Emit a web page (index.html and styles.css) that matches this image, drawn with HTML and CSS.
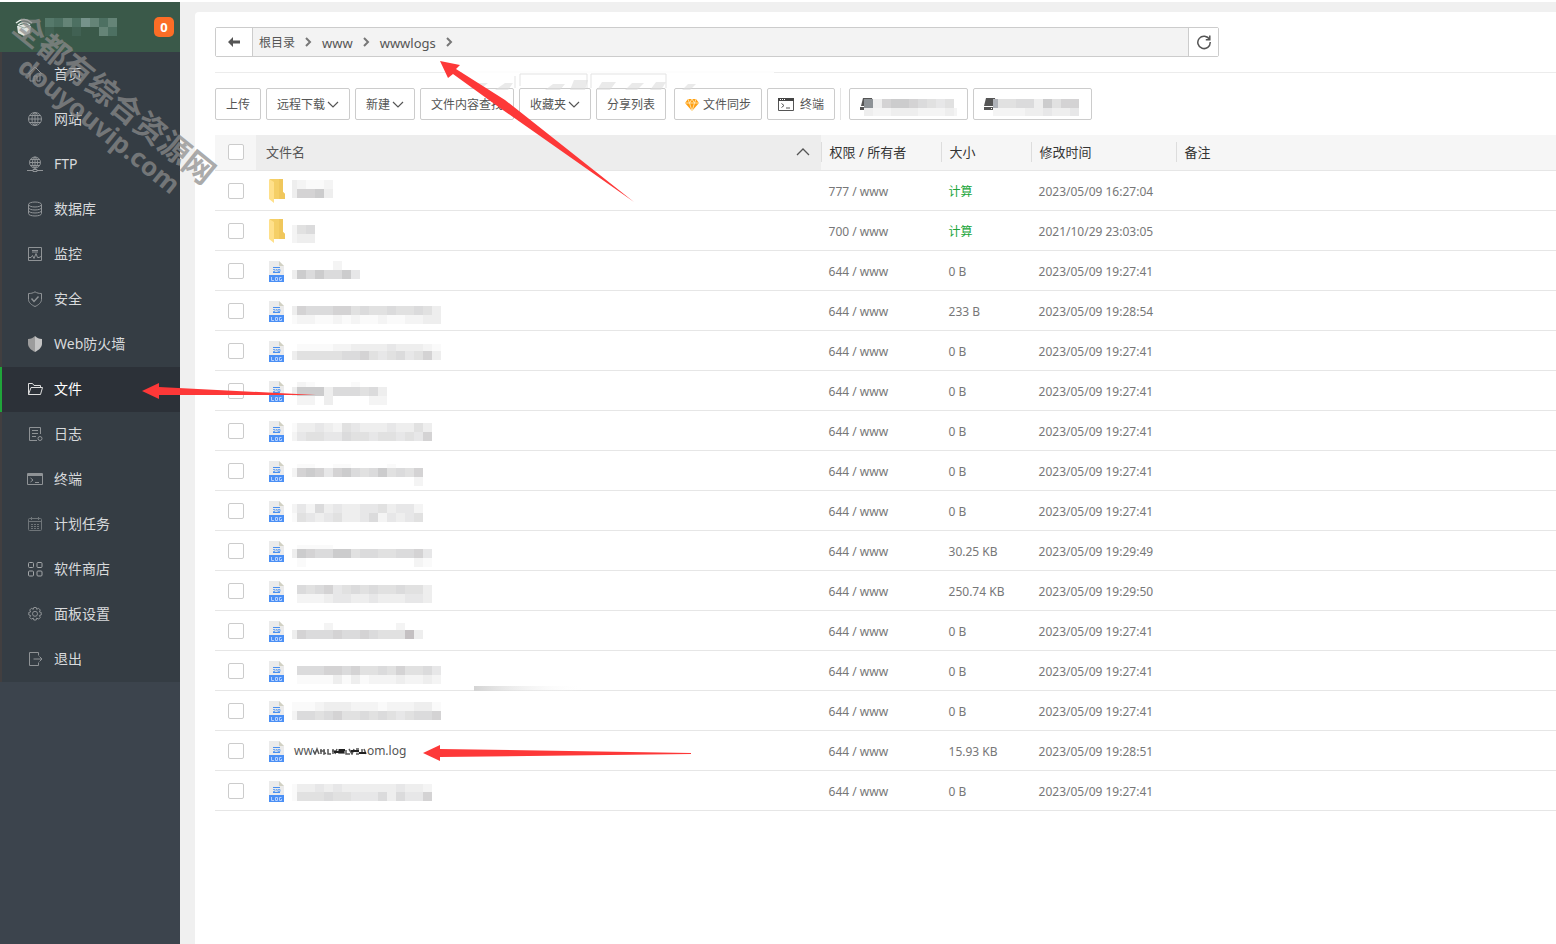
FILE: index.html
```html
<!DOCTYPE html>
<html lang="zh-CN">
<head>
<meta charset="utf-8">
<title>文件</title>
<link rel="stylesheet" href="styles.css">
</head>
<body>
<div class="app">
  <aside class="sidebar">
    <header class="brand">
      <svg class="brand-logo" width="20" height="20" viewBox="0 0 20 20"><path d="M2 6 Q10-1 18 6M4 8 Q10 3 16 8" fill="none" stroke="#e4ebe7" stroke-width="1.5"/><path d="M3 9l7-2 7 2-1 7-6 3-6-3z" fill="#dfe5e2"/><path d="M5 9l5 2 5-2" fill="none" stroke="#9aa9a1"/></svg>
      <svg class="brand-name" width="72" height="18" shape-rendering="crispEdges"><path fill="#56796b" d="M0 0h9v9H0zM27 0h9v9h-9zM54 9h9v9h-9z"/><path fill="#658477" d="M18 0h9v9h-9zM45 0h9v9h-9zM63 0h9v9h-9zM54 9h9v9h-9z"/><path fill="#4d7062" d="M9 0h9v9H9zM27 0h9v9h-9zM54 0h9v9h-9zM63 9h9v9h-9z"/><path fill="#76938b" d="M36 0h9v9h-9z"/><path fill="#416153" d="M0 9h9v9H0zM27 9h9v9h-9z"/></svg>
      <span class="badge">0</span>
    </header>
    <nav class="menu">
      <a href="#"><svg viewBox="0 0 16 16"><path d="M1 8l7-7 7 7M3 7v8h4v-5h3v5h3V7"/></svg>首页</a>
      <a href="#"><svg viewBox="0 0 16 16"><circle cx="8" cy="8" r="6.5"/><ellipse cx="8" cy="8" rx="3" ry="6.500"/><path d="M8 1.500v13M1.500 8h13M2.500 4.500h11M2.500 11.500h11"/></svg>网站</a>
      <a href="#"><svg viewBox="0 0 16 16"><circle cx="8" cy="6.500" r="5.500"/><ellipse cx="8" cy="6.500" rx="2.500" ry="5.500"/><path d="M8 1v13M2.500 6.500h11M3.500 3.500h9M3.500 9.500h9M0 14.500h6M10 14.500h6M6 13.500h4v2H6z"/></svg>FTP</a>
      <a href="#"><svg viewBox="0 0 16 16"><ellipse cx="8" cy="3.500" rx="6.500" ry="2.500"/><path d="M1.500 3.500v9c0 3.300 13 3.300 13 0v-9M1.500 6.500c0 3.300 13 3.300 13 0M1.500 9.500c0 3.300 13 3.300 13 0"/></svg>数据库</a>
      <a href="#"><svg viewBox="0 0 16 16"><path d="M1.500 1.500h13v13h-13zM5 4.500h6M5 6h6M2 11.500h2l1.500-2 1.500 3 2-5 1.500 4h1.500l2-1"/></svg>监控</a>
      <a href="#"><svg viewBox="0 0 16 16"><path d="M8 .800c2 1.300 4 1.700 6.500 1.700v6c0 3-3 5.500-6.500 7-3.500-1.500-6.500-4-6.500-7v-6C4 2.500 6 2.100 8 .800z"/><path d="M4.500 7.500L7 10.500l4.500-5" stroke-width="1.400"/></svg>安全</a>
      <a href="#"><svg viewBox="0 0 16 16"><path class="solid-dim" d="M8 0v16c-4-2-7-5-7-8V3c3 0 5-1 7-3z"/><path class="solid" d="M8 0v16c4-2 7-5 7-8V3c-3 0-5-1-7-3z"/></svg>Web防火墙</a>
      <a href="#" class="active"><svg viewBox="0 0 16 16"><path d="M1.500 13.500v-11h4l1.500 2h6.500v2M1.500 13.500l2.500-7h11.500l-2 7z"/></svg>文件</a>
      <a href="#"><svg viewBox="0 0 16 16"><path d="M13.500 8V1.500h-11v13H10M5 4.500h6M5 7.500h6M5 10.500h4"/><circle cx="13" cy="12.500" r="2"/></svg>日志</a>
      <a href="#"><svg viewBox="0 0 16 16"><path d="M.500 2.500h15v11H.500zM.500 4.500h15M.500 3.500h15M3.500 7l2.500 2-2.500 2M8 11.500h4"/></svg>终端</a>
      <a href="#"><svg viewBox="0 0 16 16" class="dim"><path d="M1.500 3.500q0-1 1-1h11q1 0 1 1v10q0 1-1 1h-11q-1 0-1-1zM1.500 5.500h13M4.500 1v3M11.500 1v3"/><path stroke-dasharray="2 1" d="M4 8.500h8M4 10.500h8M4 12.500h8"/></svg>计划任务</a>
      <a href="#"><svg viewBox="0 0 16 16" class="bright"><rect x="1.500" y="1.500" width="5" height="5" rx="1"/><rect x="10" y="1.500" width="5" height="5" rx="1"/><rect x="1.500" y="10" width="5" height="5" rx="1"/><rect x="10" y="10" width="5" height="5" rx="1"/></svg>软件商店</a>
      <a href="#"><svg viewBox="0 0 16 16"><path d="M6.800 1.500h2.400l.5 1.800 1.900-1 1.700 1.700-1 1.900 1.900.500v2.600l-1.900.5 1 1.900-1.700 1.700-1.900-1-.5 1.900H6.800l-.5-1.900-1.900 1-1.700-1.700 1-1.900-1.900-.5V6.400l1.900-.5-1-1.900 1.700-1.700 1.900 1z"/><circle cx="8" cy="7.800" r="2.500"/></svg>面板设置</a>
      <a href="#"><svg viewBox="0 0 16 16"><path d="M11.500 4.500v-3h-9v13h9v-3M6.500 8h8.500M12.500 5.500L15 8l-2.500 2.500"/></svg>退出</a>
    </nav>
  </aside>

  <main class="content">
    <section class="panel">
      <div class="path">
        <button class="path-back" aria-label="返回"><svg width="12" height="10" viewBox="0 0 12 10"><path d="M0 5l5-5v3.500h7v3H5V10z" fill="#555"/></svg></button>
        <nav class="crumbs">
          <a href="#">根目录</a><svg class="sep" viewBox="0 0 8 10"><path d="M2 1l4 4-4 4"/></svg>
          <a href="#" class="latin">www</a><svg class="sep" viewBox="0 0 8 10"><path d="M2 1l4 4-4 4"/></svg>
          <a href="#" class="latin">wwwlogs</a><svg class="sep" viewBox="0 0 8 10"><path d="M2 1l4 4-4 4"/></svg>
        </nav>
        <button class="path-reload" aria-label="刷新"><svg width="16" height="16" viewBox="0 0 16 16"><path d="M13.500 5.500A6.200 6.200 0 1 0 14.200 8M13.800 1.500v4.200H9.800" fill="none" stroke="#555" stroke-width="1.500"/></svg></button>
      </div>

      <div class="toolbar">
        <button>上传</button>
        <button>远程下载<svg class="chev" viewBox="0 0 12 12"><path d="M1 3l5 5 5-5"/></svg></button>
        <button>新建<svg class="chev" viewBox="0 0 12 12"><path d="M1 3l5 5 5-5"/></svg></button>
        <button>文件内容查找</button>
        <button>收藏夹<svg class="chev" viewBox="0 0 12 12"><path d="M1 3l5 5 5-5"/></svg></button>
        <button>分享列表</button>
        <button class="spaced"><svg class="gem" width="14" height="12" viewBox="0 0 14 12"><path d="M3 0h8l3 4-7 8-7-8z" fill="#ff9f13"/><path d="M0 4h14M3 0l1.500 4L7 12l2.500-8L11 0M4.500 4L7 0l2.500 4" fill="none" stroke="#fff0c8" stroke-width=".8"/></svg>文件同步</button>
        <button><svg class="term" width="16" height="14" viewBox="0 0 16 14"><path d="M.5.500h15v12H.500z" fill="#fff" stroke="#555"/><path d="M0 0h16v3H0z" fill="#444"/><path d="M2 1.500h1M4 1.500h1M6 1.500h1" stroke="#fff"/><path d="M3.500 5.500L6 7.500l-2.500 2M8 10h4" fill="none" stroke="#555"/></svg>终端</button>
        <span class="divider"></span>
        <button class="disk" aria-label="磁盘一"><svg width="97" height="24" viewBox="0 0 97 24"><path d="M3 6h9l1 8H1z" fill="#555"/><path d="M0 15h13v3H0z" fill="#555"/><g class="disk-mosaic" data-x="-5" data-cells="0c378876545|0322333222321"></g></svg></button>
        <button class="disk" aria-label="磁盘二"><svg width="97" height="24" viewBox="0 0 97 24"><path d="M2 6h9l1 8H0z" fill="#555"/><path d="M0 15h12v3H0z" fill="#555"/><path d="M7 16.500h4" stroke="#fff" stroke-dasharray="1 1"/><g class="disk-mosaic" data-x="5" data-cells="a556638577|2222334334"></g></svg></button>
      </div>

      <table class="files">
        <colgroup><col class="c-check"><col class="c-name"><col class="c-perm"><col class="c-size"><col class="c-time"><col></colgroup>
        <thead>
          <tr>
            <th><input type="checkbox" aria-label="全选"></th>
            <th class="sorted"><div class="sort-head">文件名<svg width="14" height="8" viewBox="0 0 14 8"><path d="M1 7l6-6 6 6" fill="none" stroke="#555" stroke-width="1.300"/></svg></div></th>
            <th><div class="head">权限 / 所有者</div></th>
            <th><div class="head">大小</div></th>
            <th><div class="head">修改时间</div></th>
            <th><div class="head">备注</div></th>
          </tr>
        </thead>
        <tbody id="rows"></tbody>
      </table>
    </section>
  </main>
</div>

<svg class="overlay" width="1240" height="800" viewBox="0 0 1240 800" aria-hidden="true">
  <defs><linearGradient id="fade"><stop offset="0" stop-color="#d4d4d4"/><stop offset="1" stop-color="#fff" stop-opacity="0"/></linearGradient></defs>
  <path d="M462 72h312" stroke="#fdfdfd" stroke-width="2"/>
  <path d="M515 88V76M520 86V74h67v14M591 88V74h75v14" fill="none" stroke="#e3e3e3"/>
  <path d="M470 88l8-5h10l-6 5zM495 90l10-7h8l-5 7zM545 90l8-6h12l-5 6zM570 90l4-10h14l-3 10zM597 90l5-8h14l-6 8zM625 90l7-7h12l-7 7zM650 90l6-8h10l-5 8zM682 90l6-6h8l-6 6z" fill="#dcdcdc" opacity=".6"/>
  <path d="M474 686h110v5H474z" fill="url(#fade)"/>
  <g fill="#fd3838">
    <path d="M440 61l20 4-4 4 49 31 129 102-134-94-47-34-5 4z"/>
    <path d="M142 391l17-8v4l157 8H159v4z"/>
    <path d="M423 753l17-8v4l251 4v1l-251 3v4z"/>
  </g>
  <g class="watermark">
    <text class="wm-name" transform="translate(11 30) rotate(39)">全都有综合资源网</text>
    <text class="wm-url" transform="translate(16 70) rotate(39)">douyouvip.com</text>
  </g>
</svg>
<script src="app.js"></script>
</body>
</html>
```
FILE: styles.css
```css
* { box-sizing: border-box; }
body {
  margin: 0;
  background: #f0f0f0;
  color: #555;
  font: 12px/18px "Noto Sans", "Noto Sans CJK SC", sans-serif;
}
a { color: inherit; text-decoration: none; }
button {
  display: flex;
  align-items: center;
  justify-content: center;
  font: inherit;
  color: inherit;
  background: #fff;
  cursor: pointer;
}
.app {
  display: flex;
  min-height: 100vh;
  border-top: 2px solid #fff;
}
.sidebar {
  flex: 0 0 180px;
  background: #3c444d;
}
.brand {
  display: flex;
  align-items: center;
  height: 50px;
  padding: 0 6px 0 14px;
  background: #3a5949;
}
.brand-name { margin-left: 11px; }
.badge {
  margin-left: auto;
  width: 20px;
  height: 20px;
  border-radius: 5px;
  background: #fc6d26;
  color: #fff;
  font-size: 13px;
  font-weight: 700;
  line-height: 20px;
  text-align: center;
}
.menu a {
  display: flex;
  align-items: center;
  gap: 11px;
  height: 45px;
  padding: 0 0 2px 25px;
  border-left: 2px solid #423f40;
  background: #353d44;
  color: #d8dadc;
  font-size: 14px;
}
.menu .active {
  border-left-color: #20a53a;
  background: #2c3138;
  color: #fff;
}
.menu svg {
  width: 16px;
  height: 16px;
  fill: none;
  stroke: #8f9396;
}
.menu .dim { stroke: #6f7579; }
.menu .bright { stroke: #a3a6a8; }
.menu .active svg { stroke: #dedede; }
.menu .solid { fill: #c4c4c4; stroke: none; }
.menu .solid-dim { fill: #9c9c9c; stroke: none; }

.content {
  flex: 1;
  min-width: 0;
  padding: 10px 0 0 15px;
}
.panel {
  min-height: 100%;
  padding: 15px 0 0 20px;
  border-radius: 4px 0 0 0;
  background: #fff;
}
.path {
  display: flex;
  width: 74.9%;
  height: 30px;
  border: 1px solid #ccc;
  border-radius: 2px;
  background: #f3f3f3;
}
.path-back { width: 37px; border: 0; border-right: 1px solid #ccc; }
.path-reload { width: 30px; border: 0; border-left: 1px solid #ccc; padding: 0; }
.crumbs {
  display: flex;
  flex: 1;
  align-items: center;
  gap: 9px;
  padding-left: 6px;
}
.crumbs a { padding-top: 1px; }
.crumbs .latin { padding-left: 1px; font-size: 13px; }
.sep { width: 8px; height: 10px; fill: none; stroke: #777; stroke-width: 2; }

.toolbar {
  display: flex;
  gap: 5px;
  margin-top: 15px;
  padding: 15px 0;
  border-top: 1px solid #ececec;
}
.toolbar button {
  height: 32px;
  padding: 2px 10px 0;
  border: 1px solid #ccc;
  border-radius: 2px;
  white-space: nowrap;
}
.toolbar .disk { padding-top: 0; }
.toolbar .spaced { margin-left: 3px; }
.chev { width: 12px; height: 12px; margin-left: 2px; fill: none; stroke: #555; stroke-width: 1.2; }
.gem { margin-right: 4px; }
.term { margin-right: 6px; }
.divider { width: 1px; margin-right: 3px; background: #e4e4e4; }

.files {
  width: 100%;
  table-layout: fixed;
  border-collapse: collapse;
}
.c-check { width: 41px; }
.c-name { width: 42.1%; }
.c-perm { width: 120px; }
.c-size { width: 90px; }
.c-time { width: 145px; }
.files th {
  height: 35px;
  padding: 0;
  border-bottom: 1px solid #e6e6e6;
  background: #f6f6f6;
  color: #333;
  font-size: 13px;
  font-weight: 400;
  text-align: left;
}
.files .sorted { background: #ededed; color: #555; }
.sort-head {
  display: flex;
  align-items: center;
  justify-content: space-between;
  padding: 0 11px 0 10px;
}
.head { height: 20px; padding-left: 8px; border-left: 1px solid #ddd; line-height: 20px; }
.files td {
  height: 40px;
  padding: 3px 8px 0;
  border-bottom: 1px solid #e6e6e6;
  color: #777;
}
.files td:first-child { padding: 2px 0 0; }
.files td.name-cell { padding: 0 0 0 12px; color: #555; }
.files input {
  appearance: none;
  display: block;
  width: 16px;
  height: 16px;
  margin: 0 0 0 13px;
  border: 1px solid #ccc;
  border-radius: 2px;
  background: #fff;
}
.calc { color: #20a53a; }
.name { display: flex; align-items: center; height: 39px; }
.file-icon { margin-top: 2px; }
.name-text { display: flex; align-items: center; margin: 2px 0 0 9px; }
.mosaic { margin-left: 3px; }

.overlay {
  position: absolute;
  top: 0;
  left: 0;
  pointer-events: none;
}
.watermark { fill: #8c8c8c; opacity: .72; font-weight: 700; }
.wm-name { font-size: 31px; font-family: "Noto Sans CJK SC", sans-serif; }
.wm-url { font-size: 26px; font-family: "Noto Sans", sans-serif; }
```
FILE: app.js
```js
var shades = {
  1: '#fafafa', 2: '#f4f4f4', 3: '#eeeeee', 4: '#e7e7e8', 5: '#e1e1e1', 6: '#dbdbdc',
  7: '#d4d3d4', 8: '#cccccd', 9: '#c4c0c2', a: '#b0b3b9', c: '#8d9296'
};

function cells(line, x, y) {
  return line.split('').map(function (c, i) {
    if (c === '0') return '';
    var first = i === 0;
    return '<rect x="' + (x + i * 9 + (first ? 4 : 0)) + '" y="' + y + '" width="' + (first ? 5 : 9) +
      '" height="9" fill="' + shades[c] + '"/>';
  }).join('');
}

var folder = '<svg class="file-icon" width="17" height="24" viewBox="0 0 17 24"><path d="M2 0h13v13l2 2v5H2z" fill="#f5cf66"/><path d="M11 0h4v13l2 2v5h-6z" fill="#f0c75c"/><path d="M1 0l5 3v21l-5-4z" fill="#ffe08a"/></svg>';
var log = '<svg class="file-icon" width="17" height="21" viewBox="0 0 17 21"><path d="M1 0h10l5 5v9H1z" fill="#ebebeb"/><path d="M11 0l5 5h-5z" fill="#d2d1c3"/><path d="M5 6.500h7M5 11.500h7" stroke="#4a90f0"/><path d="M5 8.500h2v2H5M8 8.500h1v2M10 8.500h2v2h-2z" fill="none" stroke="#70a7f0"/><path d="M1 14h15v7H1z" fill="#4a8ff5"/><path d="M3.500 16v3.500h2.500M7.500 16.500h2v3h-2zM13.500 16.500h-2v3h2v-1.500" fill="none" stroke="#b5d0ff"/></svg>';

var time = '2023/05/09 19:27:41';
var files = [
  { dir: true, perm: 777, time: '2023/05/09 16:27:04', m: [[9, '32112'], [18, '37783']] },
  { dir: true, perm: 700, time: '2021/10/29 23:03:05', m: [[14, '256'], [23, '233']] },
  { size: '0 B', m: [[10, '000002'], [19, '38686684']] },
  { size: '233 B', time: '2023/05/09 19:28:54', m: [[15, '37666775655655653'], [24, '12211212112112233']] },
  { size: '0 B', m: [[13, '01111223333433321'], [20, '35555566754564573']] },
  { size: '0 B', m: [[11, '02100001'], [25, '02203000022'], [16, '38883666563']] },
  { size: '0 B', m: [[12, '1334325433343353'], [21, '2455446554554547']] },
  { size: '0 B', m: [[13, '011001100001'], [26, '000000000000002'], [17, '278747865685657']] },
  { size: '0 B', m: [[13, '242634334453442'], [22, '154345334624345']] },
  { size: '30.25 KB', time: '2023/05/09 19:29:49', m: [[14, '01111'], [27, '0100000000000021'], [18, '3876688566556674']] },
  { size: '250.74 KB', time: '2023/05/09 19:29:50', m: [[14, '0656745656556553'], [23, '0222344334333443']] },
  { size: '0 B', m: [[12, '000020000000200'], [19, '376667667655593']] },
  { size: '0 B', m: [[15, '06667767556575564'], [24, '01111313122232232']] },
  { size: '0 B', m: [[11, '11123332221222331'], [20, '26656755656545667']] },
  { size: '15.93 KB', time: '2023/05/09 19:28:51', named: true },
  { size: '0 B', m: [[13, '1334343333334332'], [21, '1555655444636447']] }
];

var scribble = '<svg width="54" height="8" viewBox="0 0 54 8"><path d="M0 3l2 4 2-5 2 5M8 2v5M7 4h5M11 2v5l2-1M15 2v5h3M20 2v5M19 4h5M24 2l-2 5M26 3h5v3h-5zM33 3v4h4M36 2l3 5 2-5M43 2h3M43 4.500h3M43 7h3M49 2v5M51 2l2 5" fill="none" stroke="#555" stroke-width="1.500"/><path d="M21 5h10M26 3h6M38 4h8M46 6h7" stroke="#222" stroke-width="2"/></svg>';

document.getElementById('rows').innerHTML = files.map(function (f, n) {
  var name = f.named
    ? '<span class="name-text">ww' + scribble + 'om.log</span>'
    : '<svg class="mosaic" width="160" height="39" shape-rendering="crispEdges">' +
      f.m.map(function (l) { return cells(l[1], 0, l[0]); }).join('') + '</svg>';
  return '<tr><td><input type="checkbox" aria-label="选择第' + (n + 1) + '项"></td>' +
    '<td class="name-cell"><div class="name">' + (f.dir ? folder : log) + name + '</div></td>' +
    '<td>' + (f.perm || 644) + ' / www</td>' +
    '<td>' + (f.dir ? '<a href="#" class="calc">计算</a>' : f.size) + '</td>' +
    '<td>' + (f.time || time) + '</td><td></td></tr>';
}).join('');

document.querySelectorAll('.disk-mosaic').forEach(function (g) {
  g.innerHTML = g.dataset.cells.split('|').map(function (line, i) {
    return cells(line, Number(g.dataset.x), 7 + i * 9);
  }).join('');
});
```
